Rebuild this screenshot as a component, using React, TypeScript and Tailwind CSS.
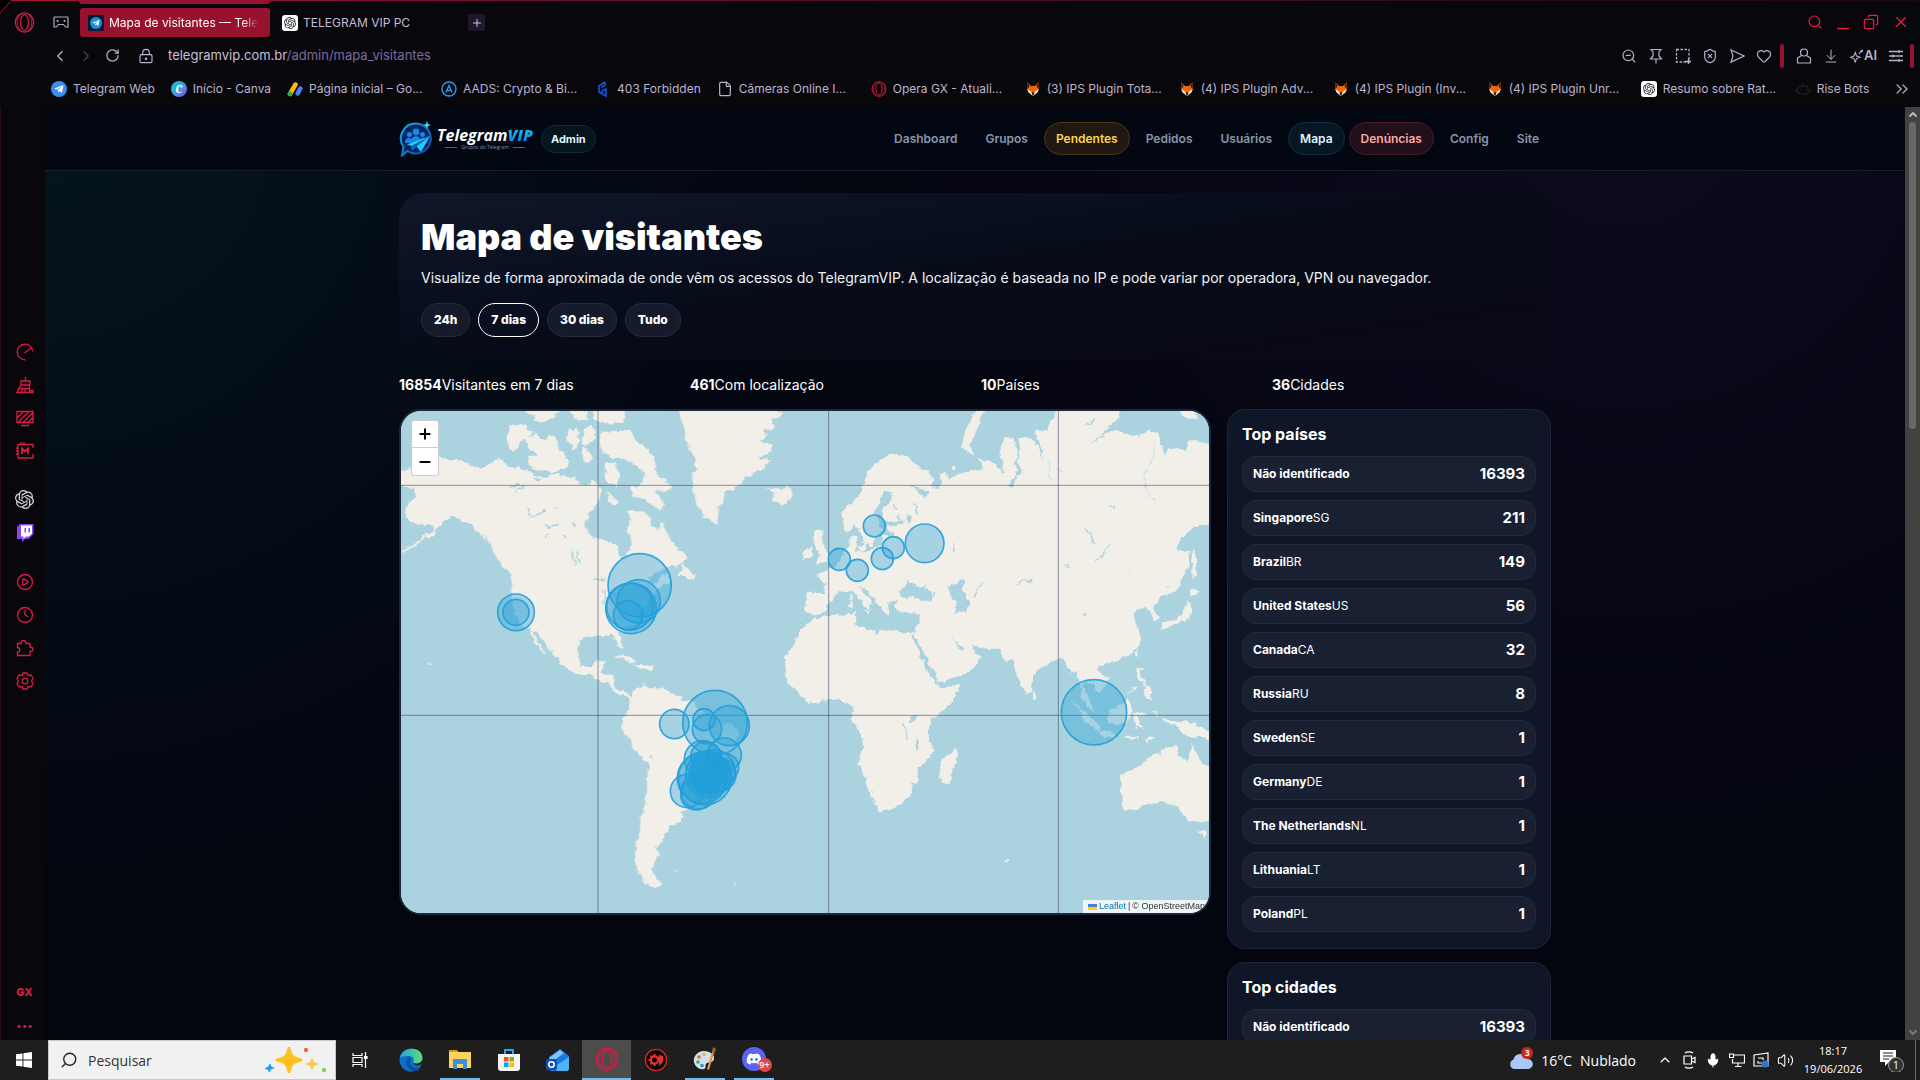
import { useState, type ReactNode } from "react";
import {
  ArrowDownToLine,
  ChevronDown,
  ChevronLeft,
  ChevronRight,
  ChevronUp,
  ChevronsRight,
  CirclePlay,
  Clock,
  Copy,
  File,
  Heart,
  LockKeyhole,
  Mic,
  Minus,
  Plus,
  RotateCw,
  Search,
  ShieldX,
  Volume2,
  X,
  ZoomOut,
} from "lucide-react";
import { FaDiscord, FaTelegramPlane } from "react-icons/fa";
import { SiOpenai } from "react-icons/si";

const OperaRing = ({ className }: { className?: string }) => (
  <svg viewBox="0 0 24 24" fill="none" stroke="#d61a45" strokeWidth="1.5" className={className}>
    <ellipse cx="12" cy="12" rx="10.4" ry="11" />
    <ellipse cx="12" cy="12" rx="4.6" ry="9" />
    <path d="M8 2.600C2.400 7 2.400 17 8 21.400M16 2.600c5.600 4.400 5.600 14.400 0 18.800" strokeWidth="1" />
  </svg>
);

const OpenAiTile = () => (
  <span className="flex h-4 w-4 shrink-0 items-center justify-center rounded-[3px] bg-white text-[#222]">
    <SiOpenai className="h-3 w-3" />
  </span>
);

const Fox = () => (
  <svg viewBox="0 0 16 16" className="h-4 w-4">
    <path d="M2 1l4 4h4l4-4-.4 8L8 15 2.400 9z" fill="#f2640c" />
    <path d="M2 1l2.500 4-1.800 3zM14 1l-2.500 4 1.800 3z" fill="#30140a" />
    <path d="M2.200 8l4 2.600L8 15 3.500 11.500zM13.800 8l-4 2.600L8 15l4.500-3.500z" fill="#f4e7dc" />
    <path d="M6.500 11.500h3L8 15z" fill="#1c0d08" />
  </svg>
);

interface Bookmark {
  label: string;
  icon: ReactNode;
  clipped?: boolean;
}

const BOOKMARKS: Bookmark[] = [
  {
    label: "Telegram Web",
    icon: (
      <span className="flex h-4 w-4 items-center justify-center rounded-full bg-[#3b8fec] text-white">
        <FaTelegramPlane className="h-2.5 w-2.5" />
      </span>
    ),
  },
  {
    label: "Início - Canva",
    icon: (
      <span className="flex h-4 w-4 items-center justify-center rounded-full bg-linear-to-br from-[#00c4cc] via-[#3aa0e0] to-[#7d2ae8] font-serif text-[12px] leading-none font-bold text-white italic">
        C
      </span>
    ),
  },
  {
    label: "Página inicial – Go...",
    clipped: true,
    icon: (
      <svg viewBox="0 0 16 16" className="h-4 w-4" strokeLinecap="round" strokeWidth="4.500">
        <path d="M8.500 3.500L3 13" stroke="#fbbc04" />
        <path d="M13.300 7.500l-2.600 5" stroke="#4285f4" />
        <circle cx="3" cy="12.800" r="2.400" fill="#34a853" />
      </svg>
    ),
  },
  {
    label: "AADS: Crypto & Bi...",
    clipped: true,
    icon: (
      <svg viewBox="0 0 16 16" className="h-4 w-4" fill="none" stroke="#2c9be8" strokeWidth="1.400">
        <circle cx="8" cy="8" r="7" />
        <path d="M5 11.500L8 4.500l3 7M6 9.500h4" />
      </svg>
    ),
  },
  {
    label: "403 Forbidden",
    icon: (
      <svg viewBox="0 0 16 16" className="h-4 w-4" fill="none" stroke="#1454d8" strokeWidth="1.700">
        <path d="M10 1L4 5v6l7 4V8L7.500 9.500v2.500M10 1v3L6.500 6.500" />
      </svg>
    ),
  },
  { label: "Câmeras Online I...", clipped: true, icon: <File className="h-4 w-4" strokeWidth={1.75} /> },
  { label: "Opera GX - Atuali...", clipped: true, icon: <OperaRing className="h-4 w-4" /> },
  { label: "(3) IPS Plugin Tota...", clipped: true, icon: <Fox /> },
  { label: "(4) IPS Plugin Adv...", clipped: true, icon: <Fox /> },
  { label: "(4) IPS Plugin (Inv...", clipped: true, icon: <Fox /> },
  { label: "(4) IPS Plugin Unr...", clipped: true, icon: <Fox /> },
  { label: "Resumo sobre Rat...", clipped: true, icon: <OpenAiTile /> },
  {
    label: "Rise Bots",
    icon: (
      <svg viewBox="0 0 16 16" className="h-4 w-4" fill="none" stroke="#1d1d22" strokeWidth="1.500">
        <rect x="3" y="5" width="10" height="8" rx="2" />
        <path d="M8 5V2M1 8v3M15 8v3M6 8.500v1.500M10 8.500v1.500" />
      </svg>
    ),
  },
];

const TabStrip = () => (
  <div className="flex h-[37px] items-end">
    <button type="button" aria-label="Menu" className="mb-1 ml-3.5 shrink-0">
      <OperaRing className="h-[21px] w-[21px]" />
    </button>
    <button type="button" aria-label="GX" className="mb-2 ml-[18px] shrink-0 text-[#b3aac6]">
      <svg viewBox="0 0 16 13" className="h-[13px] w-4" fill="none" stroke="currentColor" strokeWidth="1.200">
        <path d="M1.500 1h13l.5 1v9h-2.500l-2-2.500h-5L3.500 11H1V2z" />
        <path d="M4.500 4v2M3.500 5h2M11.500 4v2M10.500 5h2" />
      </svg>
    </button>
    <button
      type="button"
      className="ml-[11px] flex h-[29px] w-[190px] items-center gap-[5px] rounded-[3px] bg-[#98122f] px-2 text-[12px] whitespace-nowrap text-white"
    >
      <span className="flex h-4 w-4 shrink-0 items-center justify-center bg-[#0c1730]">
        <span className="flex h-3 w-3 items-center justify-center rounded-full bg-[#1d8fe0]">
          <FaTelegramPlane className="h-2 w-2" />
        </span>
      </span>
      <span className="mask-r-from-90%">Mapa de visitantes — Tele</span>
    </button>
    <button
      type="button"
      className="ml-3 flex h-[29px] w-[186px] items-center gap-[5px] text-[12px] text-[#c5bcd8]"
    >
      <OpenAiTile />
      TELEGRAM VIP PC
    </button>
    <button
      type="button"
      aria-label="Nova aba"
      className="mb-1.5 flex h-[17px] w-[17px] items-center justify-center rounded-[2px] bg-[#1f182b] text-[#d0c8e0]"
    >
      <Plus className="h-3 w-3" />
    </button>
    <div className="mr-2.5 mb-1.5 ml-auto flex items-center gap-[13px] text-[#f01c4c]">
      <button type="button" aria-label="Pesquisar abas">
        <Search className="h-4 w-4" strokeWidth={1.75} />
      </button>
      <button type="button" aria-label="Minimizar">
        <svg viewBox="0 0 14 16" className="h-4 w-3.5">
          <path d="M1 14.500h12" stroke="currentColor" strokeWidth="1.300" />
        </svg>
      </button>
      <button type="button" aria-label="Restaurar">
        <Copy className="h-4 w-4 rotate-90" strokeWidth={1.75} />
      </button>
      <button type="button" aria-label="Fechar">
        <X className="h-[18px] w-[18px]" strokeWidth={1.5} />
      </button>
    </div>
  </div>
);

const AddressBar = () => (
  <div className="flex h-[37px] items-center pl-[51px] text-[#b9b0cc]">
    <ChevronLeft className="h-[18px] w-[18px]" strokeWidth={1.75} />
    <ChevronRight className="ml-2 h-[18px] w-[18px] text-[#453f52]" strokeWidth={1.75} />
    <RotateCw className="ml-2.5 h-[15px] w-[15px]" strokeWidth={2} />
    <LockKeyhole className="ml-[18px] h-4 w-4" strokeWidth={1.75} />
    <p className="ml-3.5 text-[13px] text-[#c8c0da]">
      telegramvip.com.br<span className="text-[#7a6b9c]">/admin/mapa_visitantes</span>
    </p>
    <div className="ml-auto flex items-center gap-[11px] pr-2">
      <ZoomOut className="h-4 w-4" strokeWidth={1.75} />
      <svg viewBox="0 0 16 16" className="h-4 w-4" fill="none" stroke="currentColor" strokeWidth="1.200">
        <path d="M3 1.500h10l-2 2.500v4l2.500 3h-11L5 8V4zM8 11v4.500" />
      </svg>
      <svg viewBox="0 0 16 16" className="h-4 w-4" fill="none" stroke="currentColor" strokeWidth="1.300">
        <path d="M1.500 1.500h12.500v12.500H1.500z" strokeDasharray="2.500 1.500" />
        <path d="M10 13.500h6M13.500 10.500v5.500" />
      </svg>
      <ShieldX className="h-4 w-4" strokeWidth={1.75} />
      <svg viewBox="0 0 16 16" className="h-4 w-4" fill="none" stroke="currentColor" strokeWidth="1.200">
        <path d="M2 2l13 6-13 6 2-6z" />
      </svg>
      <Heart className="h-4 w-4" strokeWidth={1.75} />
    </div>
    <span className="h-6 w-1 rounded-full bg-[#98122f]" />
    <div className="flex items-center gap-[11px] pr-1.5 pl-3">
      <svg viewBox="0 0 16 16" className="h-4 w-4" fill="none" stroke="currentColor" strokeWidth="1.200">
        <circle cx="8" cy="4.500" r="3.500" />
        <path d="M5.500 7.500L1.500 10v5h13v-5l-4-2.500" />
      </svg>
      <ArrowDownToLine className="h-4 w-4" strokeWidth={1.5} />
      <span className="flex items-center text-[13px] font-semibold">
        <svg viewBox="0 0 16 16" className="h-3.5 w-3.5" fill="none" stroke="currentColor" strokeWidth="1.200">
          <path d="M6 4l1.500 4 4 1.500-4 1.500L6 15l-1.500-4-4-1.500 4-1.500zM10 5.500L14.500 1M13 1v3M11.500 2.500H15" />
        </svg>
        AI
      </span>
      <svg viewBox="0 0 16 16" className="h-4 w-4" fill="none" stroke="currentColor" strokeWidth="1.300">
        <path d="M1 3.500h14M1 8h14M1 12.500h14M11 2v3M5 6.500v3M11 11v3" />
      </svg>
    </div>
    <span className="mr-1.5 h-6 w-1 rounded-full bg-[#98122f]" />
  </div>
);

const BookmarkBar = () => (
  <nav aria-label="Favoritos" className="flex h-[33px] items-center pb-1 pl-[51px] text-[12px] text-[#bdb4cf]">
    <ul className="flex min-w-0 flex-1 gap-4 overflow-hidden">
      {BOOKMARKS.map((b) => (
        <li key={b.label} className={b.clipped ? "w-[138px] shrink-0" : "shrink-0"}>
          <a href="#" className="flex items-center gap-1.5 whitespace-nowrap">
            {b.icon}
            {b.label}
          </a>
        </li>
      ))}
    </ul>
    <ChevronsRight className="mr-2 h-5 w-5" strokeWidth={1.5} />
  </nav>
);

const GX_PANELS = [
  {
    name: "GX Control",
    icon: (
      <svg viewBox="0 0 18 18" className="h-[18px] w-[18px]" fill="none" stroke="currentColor" strokeWidth="1.300">
        <path d="M9.500 16.800A7.800 7.800 0 1 1 16.800 8.500M8.500 10L16 4.500" />
      </svg>
    ),
  },
  {
    name: "GX Cleaner",
    icon: (
      <svg viewBox="0 0 18 18" className="h-[18px] w-[18px]" fill="none" stroke="currentColor" strokeWidth="1.300">
        <path d="M9.500 1v4M5 5h9v4H5zM5 9L1 16.500h12.500V9M5 16.500l2-4M9 16.500v-3.500M2 12.500h11" />
        <path d="M15 14.500h2v2h-2z" />
      </svg>
    ),
  },
  {
    name: "Wallpapers",
    icon: (
      <svg viewBox="0 0 18 18" className="h-[18px] w-[18px]" fill="none" stroke="currentColor" strokeWidth="1.300">
        <path d="M1 2.500h16v11H1zM5 16.500h8M1 9l6.500-6.500M2 13.500l11-11M7 13.500l10-10M12 13.500l5-5" />
      </svg>
    ),
  },
  {
    name: "Mods",
    icon: (
      <svg viewBox="0 0 18 18" className="h-[18px] w-[18px]" fill="none" stroke="currentColor" strokeWidth="1.300">
        <path d="M17 6V2.500H2V16h15v-4M0 6h2M0 9h2M0 12h2M5 0v2M8 0v2" />
        <path d="M6 12V6.500l3 3 3-3V12" strokeWidth="1.800" />
      </svg>
    ),
  },
];

const SideBar = () => (
  <aside className="flex w-[45px] shrink-0 flex-col items-center border-l border-[#2a0a18] bg-[#08070c] pt-[228px] pl-[3px] text-[#d91c48]">
    {GX_PANELS.map((panel) => (
      <button key={panel.name} type="button" aria-label={panel.name} className="flex h-[33px] items-center">
        {panel.icon}
      </button>
    ))}
    <button type="button" aria-label="ChatGPT" className="mt-4 flex h-[33px] items-center text-[#d8d8dc]">
      <SiOpenai className="h-[19px] w-[19px]" />
    </button>
    <button type="button" aria-label="Twitch" className="flex h-[33px] items-center">
      <svg viewBox="0 0 18 18" className="h-[18px] w-[18px]">
        <path d="M4 0h13.500v10l-5 5H9l-3 3v-3H1V3z" fill="#8a46f0" />
        <path d="M5 1.500h11v8L13 12.500h-3L7.500 15v-2.500H5z" fill="#fff" />
        <path d="M8.500 4h1.500v4.500H8.500zM12.500 4H14v4.500h-1.500z" fill="#8a46f0" />
      </svg>
    </button>
    <button type="button" aria-label="Player" className="mt-4 flex h-[33px] items-center">
      <CirclePlay className="h-[18px] w-[18px]" strokeWidth={1.75} />
    </button>
    <button type="button" aria-label="Histórico" className="flex h-[33px] items-center">
      <Clock className="h-[18px] w-[18px]" strokeWidth={1.75} />
    </button>
    <button type="button" aria-label="Extensões" className="flex h-[33px] items-center">
      <svg viewBox="0 0 18 18" className="h-[18px] w-[18px]" fill="none" stroke="currentColor" strokeWidth="1.300">
        <path d="M1.500 4.500H5c0-4 5-4 5 0h4v3.500c4 0 4 4.500 0 4.500v4H1.500V13c3 0 3-4.500 0-4.500z" />
      </svg>
    </button>
    <button type="button" aria-label="Configurações" className="flex h-[33px] items-center">
      <svg viewBox="0 0 18 18" className="h-[18px] w-[18px]" fill="none" stroke="currentColor" strokeWidth="1.300">
        <path d="M7 1h4l1 2.500 3-.5 2 3.500L15.500 9l1.500 2.500-2 3.500-3-.5-1 2.500H7l-1-2.500-3 .5-2-3.500L2.500 9 1 6.500 3 3l3 .5z" />
        <circle cx="9" cy="9" r="2.800" />
      </svg>
    </button>
    <span className="mt-auto text-[11px] font-extrabold">GX</span>
    <span className="mt-4 mb-1 text-[16px] leading-5 font-extrabold">···</span>
  </aside>
);

const Logo = () => (
  <a href="#" className="flex items-center gap-1" aria-label="TelegramVIP">
    <svg viewBox="0 0 34 36" className="h-9 w-[34px]">
      <defs>
        <linearGradient id="bubble" x1="0" y1="0" x2="1" y2="1">
          <stop offset="0" stopColor="#13b4ea" />
          <stop offset="1" stopColor="#0a3fae" />
        </linearGradient>
      </defs>
      <path
        d="M17 2.500a15 15 0 1 1-8.500 27.500L3 34.500l1.500-8.500A15 15 0 0 1 17 2.500z"
        fill="#06255f"
        stroke="url(#bubble)"
        strokeWidth="2"
      />
      <g fill="#1c86e8">
        <circle cx="17" cy="11" r="3.400" />
        <circle cx="10.500" cy="13.500" r="2.500" />
        <circle cx="23.500" cy="13.500" r="2.500" />
        <path d="M11 22c0-9 12-9 12 0zM6 22c0-6 5-6 6-4l-1 4zM28 22c0-6-5-6-6-4l1 4z" />
      </g>
      <path d="M8 23.500L31 15 22 31l-4.500-5.500L13 29.500l-.5-4.500z" fill="#25c8f6" />
      <path d="M12.500 25L31 15 17.500 25.500 13 29.500z" fill="#0c62b4" />
      <path d="M28 0l1 3 3 1-3 1-1 3-1-3-3-1 3-1z" fill="#3fe4f7" />
    </svg>
    <span className="flex flex-col items-center font-['Open_Sans',sans-serif]">
      <span className="text-[16px] leading-[18px] font-bold text-white italic">
        Telegram
        <span className="bg-linear-to-b from-[#22d3ee] to-[#1670ea] bg-clip-text font-extrabold text-transparent">
          VIP
        </span>
      </span>
      <span className="flex items-center gap-1 text-[5px] leading-[7px] text-[#7c93b4]">
        <i className="h-px w-3 bg-[#4b5f80]" />
        Grupos do Telegram
        <i className="h-px w-3 bg-[#4b5f80]" />
      </span>
    </span>
  </a>
);

const NAV = [
  { label: "Dashboard", style: "border-transparent text-[#8896ac]" },
  { label: "Grupos", style: "border-transparent text-[#8896ac]" },
  { label: "Pendentes", style: "border-[#4d3711] bg-[#1f1813] text-[#fcd34d]" },
  { label: "Pedidos", style: "border-transparent text-[#8896ac]" },
  { label: "Usuários", style: "border-transparent text-[#8896ac]" },
  { label: "Mapa", style: "border-[#0e3044] bg-[#061723] text-[#dff4ff]" },
  { label: "Denúncias", style: "border-[#4c1a24] bg-[#211019] text-[#fca5a5]" },
  { label: "Config", style: "border-transparent text-[#8896ac]" },
  { label: "Site", style: "border-transparent text-[#8896ac]" },
];

const AdminHeader = () => (
  <header className="border-b border-[#171d29] bg-[#030711]">
    <div className="mx-auto flex h-[63px] max-w-[1152px] items-center">
      <Logo />
      <span className="ml-2 rounded-full border border-[#0f2c3c] bg-[#06141e] px-[9px] py-1 text-[11px] leading-[18px] font-bold text-[#dff4ff]">
        Admin
      </span>
      <nav className="ml-auto flex items-center gap-1">
        {NAV.map((item) => (
          <a
            key={item.label}
            href="#"
            className={`rounded-full border px-[11px] py-1.5 text-[12px] leading-[19px] font-semibold ${item.style}`}
          >
            {item.label}
          </a>
        ))}
      </nav>
    </div>
  </header>
);

const PERIODS = ["24h", "7 dias", "30 dias", "Tudo"];

const Hero = () => {
  const [period, setPeriod] = useState("7 dias");

  return (
    <section className="rounded-[26px] bg-linear-to-br from-[#0f172a] via-[#070b18] to-[#0a0814] px-[22px] pt-[22px] pb-[23px]">
      <h1 className="text-[36px] leading-[45px] font-black text-white">Mapa de visitantes</h1>
      <p className="mt-1.5 text-[14px] leading-6 text-[#f1f3f7]">
        Visualize de forma aproximada de onde vêm os acessos do TelegramVIP. A localização é baseada no IP e pode
        variar por operadora, VPN ou navegador.
      </p>
      <div className="mt-[13px] flex gap-2">
        {PERIODS.map((p) => (
          <button
            key={p}
            type="button"
            aria-pressed={p === period}
            onClick={() => setPeriod(p)}
            className={`rounded-full border px-3 py-1.5 text-[12px] leading-5 font-extrabold text-white ${
              p === period ? "border-white bg-[#0a1020]" : "border-[#242b3b] bg-[#151b2b]"
            }`}
          >
            {p}
          </button>
        ))}
      </div>
    </section>
  );
};

const STATS = [
  { value: "16854", label: "Visitantes em 7 dias" },
  { value: "461", label: "Com localização" },
  { value: "10", label: "Países" },
  { value: "36", label: "Cidades" },
];

// [cx, cy, r] on the map drawing's own grid
const VISITORS: [number, number, number][] = [
  [348, 613, 55],
  [348, 613, 39],
  [719, 532, 95],
  [716, 580, 65],
  [693, 601, 76],
  [690, 596, 70],
  [684, 622, 44],
  [823, 948, 44],
  [945, 944, 97],
  [988, 953, 60],
  [912, 935, 33],
  [921, 964, 44],
  [973, 1041, 51],
  [908, 1053, 55],
  [918, 1047, 46],
  [907, 1111, 75],
  [915, 1110, 80],
  [925, 1100, 68],
  [925, 1080, 50],
  [861, 1149, 50],
  [888, 1160, 46],
  [896, 1150, 53],
  [940, 1090, 65],
  [974, 1078, 42],
  [958, 1100, 50],
  [920, 1105, 46],
  [925, 1100, 58],
  [1423, 354, 33],
  [1318, 454, 33],
  [1372, 487, 33],
  [1447, 452, 33],
  [1480, 419, 33],
  [1574, 406, 58],
  [2082, 913, 98],
];

const AMERICAS =
  "M-20 190L30 180 60 155 115 148 160 155 190 158 215 172 245 182 270 165 300 150 315 165 330 178 365 180 395 195 410 207 440 205 470 195 500 207 525 205 540 228 560 235 575 215 595 225 602 250 600 270 590 290 565 315 557 345 560 372 580 388 610 390 640 412 655 415 655 445 670 455 680 435 695 410 690 385 683 370 690 345 685 310 710 307 745 320 755 350 775 365 785 342 800 370 815 400 830 420 855 435 857 455 835 475 800 478 770 490 750 510 742 530 765 525 790 500 805 495 815 520 800 532 775 540 765 560 742 580 730 600 715 625 700 645 675 660 655 672 668 715 662 722 650 702 640 680 600 684 570 685 540 695 533 720 535 750 545 775 575 778 590 760 615 755 610 775 605 798 640 801 645 836 660 851 680 853 692 864 705 846 735 829 745 841 780 841 815 851 845 876 885 881 895 906 930 921 960 946 1000 951 1017 966 1015 991 1000 1018 970 1056 965 1096 930 1121 900 1156 880 1186 860 1206 835 1206 850 1226 840 1246 808 1249 805 1271 785 1271 795 1286 770 1321 780 1336 765 1356 757 1386 770 1411 790 1428 765 1441 740 1426 720 1401 707 1366 705 1331 715 1286 722 1236 735 1186 740 1136 745 1066 715 1041 700 1026 690 996 662 961 668 931 690 906 692 876 680 864 655 861 630 841 625 828 600 818 575 801 545 801 510 786 475 766 478 750 460 742 430 700 405 668 400 680 440 738 430 735 410 710 395 690 385 660 355 640 340 600 332 550 335 500 310 475 285 440 260 400 235 370 215 350 190 340 155 325 125 340 100 375 60 405 3 437 3 430 70 390 105 360 80 350 50 350 25 335 12 310 25 285 50 265 40 240-20 232z";

const ARCTIC =
  "M330 48L365 45 400 75 370 95 340 132 320 110zM375 90L410 78 425 95 465 80 475 120 510 155 500 180 460 190 420 190 385 175 390 145 415 140 380 112zM370 5L490 5 440 40 410 45 400 22zM500 5L560 5 565 35 540 37zM575 5L672 5 670 45 590 42zM505 70L530 58 542 100 520 125 500 100zM550 60L590 60 580 100 548 110zM550 110L577 150 562 172 545 150zM600 78L640 68 690 70 712 105 745 125 770 165 760 190 815 232 800 252 765 245 790 290 780 305 740 280 700 265 688 238 720 230 735 200 710 175 680 155 640 150 600 125zM612 165L650 165 660 200 645 235 620 225zM620 250L657 282 640 290 622 275zM835 0L845 40 855 70 860 110 885 150 890 185 875 195 878 240 890 290 915 325 950 347 958 300 975 255 1015 235 1035 205 1080 190 1115 155 1065 148 1112 135 1115 110 1078 97 1102 80 1085 65 1125 60 1115 35 1145 22 1125 0zM1100 240L1130 245 1160 235 1180 255 1170 275 1140 290 1115 280 1122 260zM848 462L860 480 880 500 878 515 830 500 845 485zM636 745L665 740 712 762 690 766 665 750zM700 770L760 774 757 784 722 784zM75 375l40 -5 -10 15 -25 5z";

const EURASIA =
  "M125 310L145 290 175 270 190 230 205 190 240 155 285 135 325 150 350 175 385 190 402 215 395 238 410 240 425 235 420 200 437 190 442 215 455 210 490 190 545 190 550 175 535 150 575 160 612 197 605 160 600 130 615 90 640 92 650 130 645 180 652 200 620 232 640 235 665 190 652 160 662 110 650 85 685 85 715 110 727 158 730 130 715 95 705 70 745 65 750 40 775 0 962 0 955 30 905 80 950 65 1000 85 1035 75 1045 65 1075 75 1085 120 1095 140 1110 120 1160 125 1170 95 1250 115 1250 352 1185 355 1150 385 1125 420 1150 430 1168 435 1165 480 1140 530 1115 555 1080 565 1060 600 1077 630 1060 642 1050 610 1035 600 1015 608 990 600 1020 580 1005 612 1000 625 1020 665 1022 700 1000 735 970 750 930 765 905 775 890 771 905 791 925 811 915 841 895 856 885 836 860 821 850 821 847 836 865 866 880 896 878 911 860 896 845 861 843 831 830 796 810 798 800 766 790 750 770 755 745 765 730 771 700 801 695 851 680 859 665 836 645 776 642 752 620 762 600 725 540 720 520 712 495 722 485 718 465 698 455 683 462 700 485 732 515 708 525 735 543 748 520 781 490 801 445 818 420 826 410 806 385 756 350 692 343 672 358 640 360 620 330 618 295 610 285 590 292 575 262 585 270 622 250 612 240 590 215 565 190 540 180 532 185 550 215 580 210 610 200 600 170 560 155 545 110 555 85 590 80 600 60 620 40 622 15 610 20 555 72 555 78 530 50 500 75 490 95 480 120 460 130 430 150 415 148 390 165 380 172 400 168 422 190 410 180 365 165 352 138 373 125 345z";

const AFRICA =
  "M5 660L35 635 50 635 80 625 165 615 170 635 165 650 210 665 235 678 240 668 265 665 290 668 325 672 343 670 337 685 355 730 372 765 375 786 415 826 422 841 480 831 465 866 430 906 395 936 385 961 390 991 398 1016 395 1046 355 1076 357 1116 335 1131 335 1156 290 1201 235 1208 225 1196 215 1156 200 1131 195 1101 178 1066 178 1046 190 1016 185 981 155 936 160 896 130 886 120 874 85 876 25 888 -10 851 -42 816 -45 756 -40 740 -10 690z";

const EAST_ISLANDS =
  "M45 365L70 365 60 388 85 440 92 460 45 470 60 440 40 400zM10 430L35 415 40 445 10 460zM560 0L530 60 510 110 525 145 485 120 495 70 530 0zM1175 430L1185 430 1190 490 1178 520zM1172 540L1200 550 1175 568zM1165 575L1176 600 1165 635 1120 650 1085 668 1090 642 1130 635 1150 610zM1012 725l8 5 -8 18 -5 -8zM698 848L713 868 700 876zM465 1018L472 1046 445 1124 425 1124 418 1096 425 1056 450 1041zM920 916L985 871 998 906 975 951 930 946zM815 876L850 906 905 956 892 966 860 946 835 901zM895 966L950 981 945 991 900 984zM970 985l50 3 -2 6 -48 -2zM1035 998l25 -12 2 5 -22 12zM1000 916L1047 914 1010 926 1030 961 1015 951 1005 966zM1010 778L1025 782 1020 806 1050 841 1052 876 1030 861 1038 835 1008 806zM985 856l18 -22 3 3 -18 22zM1065 905l8 20 -6 2 -5 -20zM1090 931L1115 934 1130 946 1160 936 1250 981 1250 1005 1205 988 1150 981 1130 956 1100 946zM960 1101L985 1086 1020 1076 1060 1036 1080 1041 1085 1021 1130 1014 1133 1041 1165 1063 1178 1006 1190 1041 1200 1056 1250 1090 1250 1235 1190 1246 1160 1231 1140 1206 1125 1196 1085 1178 1030 1198 975 1211 970 1196 965 1156zM1195 1268L1222 1271 1212 1296zM455 175l12 0 2 12 -12 0zM152 560l6 0 0 12 -6 0zM150 575l8 2 0 20 -7 0zM185 608l20 2 -2 8zM1140 5l50 -5 0 30 -45 -5zM612 1356l14 0 -4 8z";

const EAST_WATERS =
  "M165 420L195 425 200 405 220 415 225 390 245 370 235 330 218 315 240 285 250 248 278 252 275 272 250 300 248 325 265 345 310 335 310 350 262 355 270 375 290 370 280 385 250 380 250 410 215 425 170 430zM335 228L350 240 370 240 385 250 380 268 372 268 350 250zM300 555L325 518 345 535 365 540 385 513 372 535 405 565 395 578 370 578 340 568 305 572zM445 540L480 515 492 520 490 550 505 580 498 618 465 612 470 590 455 565zM320 320l15 5 0 15 -15 0zM328 925l20 -5 -5 22 -15 0zM345 1000l6 -12 4 40 -6 -2zM310 945l4 -2 10 45 -4 2z";

const WorldMap = () => (
  <svg viewBox="3 9 2424 1506" preserveAspectRatio="xMidYMid slice" className="block h-full w-full">
    <defs>
      <filter id="coast" x="0" y="0" width="100%" height="100%">
        <feTurbulence type="fractalNoise" baseFrequency="0.05" numOctaves="4" seed="4" />
        <feDisplacementMap in="SourceGraphic" scale="20" xChannelSelector="R" yChannelSelector="G" />
      </filter>
    </defs>
    <rect x="0" y="0" width="2440" height="1530" fill="#aad3df" />
    <g filter="url(#coast)">
      <g fill="#f2efe9">
        <path d={AMERICAS} />
        <path d={ARCTIC} />
        <path d="M818 1388l20 -4 -10 8zM995 1418l14 8 -4 3zM85 762l8 8 -6 4z" />
        <g transform="translate(1200 0)">
          <path d={EURASIA} />
          <path d={AFRICA} />
          <path d={EAST_ISLANDS} />
        </g>
      </g>
      <g fill="none" stroke="#aad3df" strokeWidth="5">
        <path d="M328 240l30 -12M345 252l30 -20M392 330l45 -22M380 300l15 20M440 355l35 -5M435 388l8 -10M515 435l12 35M528 432l14 38M465 295l8 5M490 380l8 10M578 515l40 0M615 545l-5 45M748 1045l8 6M400 210l25 8M520 345l10 14" />
        <path d="M275 420l-20 -40M262 395l-14 22" strokeWidth="3" />
        <g transform="translate(1200 0)">
          <path
            d="M883 460l25 -12 18 -40M650 530l12 -10 35 -2M530 540l22 -18M525 570l5 -25M858 50l30 -15M875 105l35 -22M850 365l22 10 8 30M460 430l5 -25M930 290l12 10M795 475l8 2M850 617l8 4M1100 535l6 3M985 490l4 2M680 563l4 2M345 290l10 30M280 290l8 15M295 320l8 14"
            strokeWidth="4"
          />
          <path d="M1063 100l0 45 -30 50 5 50 32 42M745 160l5 60M775 180l15 10" strokeWidth="2" />
        </g>
      </g>
      <path d={EAST_WATERS} transform="translate(1200 0)" fill="#aad3df" />
    </g>
    <path
      d="M594 0v1530M1286 0v1530M1975 0v1530M0 232h2440M0 922h2440"
      stroke="#3a3a55"
      strokeOpacity=".55"
      strokeWidth="3"
    />
    <g fill="#229ed9" fillOpacity=".36" stroke="#229ed9" strokeOpacity=".9" strokeWidth="5">
      {VISITORS.map(([cx, cy, r], i) => (
        <circle key={i} cx={cx} cy={cy} r={r} />
      ))}
    </g>
  </svg>
);

const MapPanel = () => (
  <div className="relative h-[506px] overflow-hidden rounded-[22px] border-2 border-[#1d263a] bg-[#aad3df]">
    <WorldMap />
    <div className="absolute top-[9px] left-2.5 flex flex-col rounded-[3px] border border-black/20 bg-white text-black">
      <button
        type="button"
        aria-label="Aproximar"
        className="flex h-[27px] w-[26px] items-center justify-center border-b border-[#ccc]"
      >
        <Plus className="h-4 w-4" strokeWidth={3} />
      </button>
      <button type="button" aria-label="Afastar" className="flex h-[27px] w-[26px] items-center justify-center">
        <Minus className="h-4 w-4" strokeWidth={3} />
      </button>
    </div>
    <div className="absolute right-0 bottom-0 flex h-[13px] items-center gap-[2px] bg-white/80 pr-1 pl-[5px] font-['Liberation_Sans',sans-serif] text-[9px] text-[#333]">
      <svg viewBox="0 0 9 6" className="h-1.5 w-[9px]">
        <path d="M0 0h9v3H0z" fill="#4c7be1" />
        <path d="M0 3h9v3H0z" fill="#ffd500" />
      </svg>
      <a href="#" className="text-[#0078a8]">
        Leaflet
      </a>
      <span>|</span>
      <span>© OpenStreetMap</span>
    </div>
  </div>
);

interface Place {
  name: string;
  code?: string;
  total: number;
}

const COUNTRIES: Place[] = [
  { name: "Não identificado", total: 16393 },
  { name: "Singapore", code: "SG", total: 211 },
  { name: "Brazil", code: "BR", total: 149 },
  { name: "United States", code: "US", total: 56 },
  { name: "Canada", code: "CA", total: 32 },
  { name: "Russia", code: "RU", total: 8 },
  { name: "Sweden", code: "SE", total: 1 },
  { name: "Germany", code: "DE", total: 1 },
  { name: "The Netherlands", code: "NL", total: 1 },
  { name: "Lithuania", code: "LT", total: 1 },
  { name: "Poland", code: "PL", total: 1 },
];

const CITIES: Place[] = [{ name: "Não identificado", total: 16393 }];

const RankCard = ({ title, places }: { title: string; places: Place[] }) => (
  <section className="rounded-[18px] border border-[#1e2739] bg-[#0e1628] px-3.5 pt-3.5 pb-4">
    <h2 className="text-[16px] leading-5 font-bold text-white">{title}</h2>
    <ul className="mt-3 flex flex-col gap-2">
      {places.map((p) => (
        <li
          key={p.name}
          className="flex h-9 items-center justify-between rounded-[14px] border border-[#222a3b] bg-[#182032] px-2.5 text-white"
        >
          <span className="text-[12px]">
            <strong className="font-bold">{p.name}</strong>
            {p.code}
          </span>
          <strong className="text-[15px] font-bold">{p.total}</strong>
        </li>
      ))}
    </ul>
  </section>
);

const APPS: { name: string; state?: "open" | "active"; icon: ReactNode }[] = [
  {
    name: "Edge",
    icon: (
      <svg viewBox="0 0 24 24" className="h-6 w-6">
        <defs>
          <linearGradient id="edge" x1="0" y1="0" x2="1" y2="0">
            <stop offset="0" stopColor="#1d9fe8" />
            <stop offset="1" stopColor="#5fe070" />
          </linearGradient>
        </defs>
        <circle cx="12" cy="12" r="11.500" fill="#0f6fc6" />
        <path d="M.5 11C2-2 23-3 23.500 10c0 6-8 7-9.500 4 2-2 0-6-4-6S1 8 .5 11z" fill="url(#edge)" />
        <path d="M10 9c-6 5-1 14 6 14 3 0 5-2 6-4-4 2-10 1-11-4-.4-2 .5-3 1-4z" fill="#0b4fa0" />
        <path d="M14 14c1.500 3 9.500 2 9.500-4v5c-2 3-8 4-9.500-1z" fill="#202020" />
      </svg>
    ),
  },
  {
    name: "Explorador",
    state: "open",
    icon: (
      <svg viewBox="0 0 24 24" className="h-6 w-6">
        <path d="M1 3h8l2 3H1z" fill="#d99a12" />
        <path d="M1 5h22v16H1z" fill="#fbd35f" />
        <path d="M5 12h14v10h-4v-5H9v5H5z" fill="#3f8fdc" />
      </svg>
    ),
  },
  {
    name: "Loja",
    icon: (
      <svg viewBox="0 0 24 24" className="h-6 w-6">
        <path d="M8 7V2h8v5" fill="none" stroke="#22a7f0" strokeWidth="2" />
        <path d="M1 6h22v14a3 3 0 0 1-3 3H4a3 3 0 0 1-3-3z" fill="#f4f4f4" />
        <path d="M7 9h4.500v4.500H7z" fill="#f25022" />
        <path d="M12.500 9H17v4.500h-4.500z" fill="#7fba00" />
        <path d="M7 14.500h4.500V19H7z" fill="#00a4ef" />
        <path d="M12.500 14.500H17V19h-4.500z" fill="#ffb900" />
      </svg>
    ),
  },
  {
    name: "Outlook",
    icon: (
      <svg viewBox="0 0 24 24" className="h-6 w-6">
        <path d="M3 9L14 1l9 7v12a3 3 0 0 1-3 3H6a3 3 0 0 1-3-3z" fill="#1e78e0" />
        <path d="M3 10L14 2l4 3L6 14z" fill="#7cc6fb" />
        <path d="M23 9L8 19l3 4h9a3 3 0 0 0 3-3z" fill="#4fb4f7" />
        <rect x="0" y="11" width="11" height="11" rx="2" fill="#0f4fb8" />
        <circle cx="5.500" cy="16.500" r="2.700" fill="none" stroke="#fff" strokeWidth="1.500" />
      </svg>
    ),
  },
  { name: "Opera GX", state: "active", icon: <OperaRing className="h-6 w-6" /> },
  {
    name: "Otimizador",
    icon: (
      <svg viewBox="0 0 24 24" className="h-6 w-6">
        <circle cx="12" cy="12" r="10.600" fill="#120506" stroke="#d32626" strokeWidth="1.400" />
        <circle cx="10.500" cy="12" r="3.600" fill="none" stroke="#e33030" strokeWidth="2.200" />
        <path
          d="M10.500 6v2M10.500 16v2M4.500 12h2M6.300 7.800l1.400 1.400M6.300 16.200l1.400-1.400"
          stroke="#e33030"
          strokeWidth="2"
        />
        <path d="M13 12l2-5 4 1v6l-4 4v-5z" fill="#e33030" />
      </svg>
    ),
  },
  {
    name: "Paint",
    state: "open",
    icon: (
      <svg viewBox="0 0 24 24" className="h-6 w-6">
        <path d="M11 4C4 4 0 10 1 15s6 8 10 7c3-1 0-4 3-6 2-1 6 0 7-4s-4-8-10-8z" fill="#cfe3ee" />
        <circle cx="6" cy="10" r="1.800" fill="#e85a3c" />
        <circle cx="11" cy="7.500" r="1.800" fill="#f5b52e" />
        <circle cx="5" cy="15" r="1.800" fill="#43a858" />
        <circle cx="9" cy="18.500" r="1.800" fill="#3a86d8" />
        <path d="M21 6l-5 17-2-1L19 5z" fill="#e89436" />
        <path d="M19 5l1-5 3 2-2 5z" fill="#9c6a40" />
      </svg>
    ),
  },
  {
    name: "Discord",
    state: "open",
    icon: (
      <span className="relative flex h-6 w-6 items-center justify-center rounded-full bg-[#5865f2] text-white">
        <FaDiscord className="h-4 w-4" />
        <span className="absolute -right-1.5 -bottom-px flex h-3.5 w-3.5 items-center justify-center rounded-full bg-[#e0454a] text-[9px] font-semibold">
          9+
        </span>
      </span>
    ),
  },
];

const TaskBar = () => (
  <footer className="flex h-10 shrink-0 items-stretch bg-[#1e1e1e] font-['Open_Sans',sans-serif] text-white">
    <button type="button" aria-label="Iniciar" className="flex w-12 items-center justify-center">
      <svg viewBox="0 0 16 16" className="h-4 w-4" fill="#fff">
        <path d="M0 2.300L6.500 1.400v6.200H0zM7.400 1.300L16 0v7.600H7.400zM0 8.400h6.500v6.200L0 13.700zM7.400 8.400H16V16l-8.600-1.300z" />
      </svg>
    </button>
    <label className="flex w-72 items-center border border-[#c8c8c8] bg-[#f1f1f1] pl-[11px] text-[#222]">
      <Search className="h-[18px] w-[18px] -scale-x-100" strokeWidth={1.75} />
      <input
        type="search"
        aria-label="Pesquisar"
        placeholder="Pesquisar"
        className="ml-2.5 min-w-0 flex-1 bg-transparent text-[14px] outline-none placeholder:text-[#333]"
      />
      <svg viewBox="0 0 62 26" className="mr-2 h-[26px] w-[62px]">
        <path d="M24 1c2 8 3 10 12 12-9 2-10 4-12 12-2-8-3-10-12-12 9-2 10-4 12-12z" fill="#fcc21f" />
        <path d="M24 1c2 8 3 10 12 12-9 2-10 4-12 12-2-8-3-10-12-12 9-2 10-4 12-12z" fill="none" stroke="#fcc21f" strokeWidth="3" strokeLinejoin="round" />
        <path d="M47 11c1 4 2 5 6 6-4 1-5 2-6 6-1-4-2-5-6-6 4-1 5-2 6-6z" fill="#fcc94a" stroke="#fcc94a" strokeLinejoin="round" />
        <path d="M5 17c.5 2 1.500 3.500 4 4-2.500.5-3.500 1-4.500 4C4 23 3 22 0 21.500 3 20.500 4 20 5 17z" fill="#1da1f2" stroke="#1da1f2" />
        <circle cx="41" cy="3" r="2.200" fill="#f26a3a" />
        <circle cx="59" cy="23" r="2.200" fill="#8ccf4d" />
      </svg>
    </label>
    <button type="button" aria-label="Visão de tarefas" className="mr-0.5 flex w-12 items-center justify-center">
      <svg viewBox="0 0 16 16" className="h-4 w-4" fill="none" stroke="#fff" strokeWidth="1.200">
        <path d="M1 1v2.500h9V1M1 15v-2.500h9V15M1 5.500h9v5H1zM13.500 0v16" />
        <path d="M12.500 4.500h2.500v2h-2.500z" fill="#fff" />
      </svg>
    </button>
    {APPS.map((app) => (
      <button
        key={app.name}
        type="button"
        aria-label={app.name}
        className={`flex w-[49px] flex-col items-center ${app.state === "active" ? "bg-[#4c4c4c]" : ""}`}
      >
        <span className="flex flex-1 items-center">{app.icon}</span>
        {app.state && <span className={`h-0.5 bg-[#76b9ed] ${app.state === "active" ? "w-full" : "w-10"}`} />}
      </button>
    ))}
    <div className="ml-auto flex items-center">
      <span className="relative">
        <svg viewBox="0 0 24 18" className="h-[18px] w-6">
          <path d="M5 18a5 5 0 0 1-.5-9.500A7 7 0 0 1 18 8a5 5 0 0 1 1.500 10z" fill="#a9c8f7" />
        </svg>
        <span className="absolute -top-1 right-0 flex h-3 w-3 items-center justify-center rounded-full bg-[#c42b1c] text-[8px] font-bold">
          3
        </span>
      </span>
      <span className="ml-2 text-[14px]">16°C</span>
      <span className="ml-2 text-[14px]">Nublado</span>
      <div className="ml-[21px] flex items-center gap-2">
        <ChevronUp className="h-4 w-4" strokeWidth={1.75} />
        <svg viewBox="0 0 16 18" className="h-[18px] w-4" fill="none" stroke="#fff" strokeWidth="1.200">
          <path d="M3 5h7.500v8H3zM10.500 8l3.500-1.500v5L10.500 10M4 2c2-1.500 6-1.500 8 0M4 16c2 1.500 6 1.500 8 0" />
        </svg>
        <Mic className="h-[17px] w-4 fill-white" strokeWidth={1.5} />
        <svg viewBox="0 0 16 16" className="h-4 w-4" fill="none" stroke="#fff" strokeWidth="1.200">
          <path d="M5 3h10.500v8H3.500V7M9 11v3M6 14.500h6.500M.5 2h4v3.500h-4z" />
        </svg>
        <svg viewBox="0 0 16 16" className="h-4 w-4" fill="none" stroke="#fff" strokeWidth="1.200">
          <path d="M1 3l14-2v13H1zM5 6h5v2M10 11H5V9" />
          <circle cx="12" cy="12" r="3.600" fill="#2a78c8" stroke="none" />
        </svg>
        <Volume2 className="h-[17px] w-[17px]" strokeWidth={1.5} />
      </div>
      <div className="ml-[9px] w-[60px] text-center text-[11px] leading-[18px]">
        <p>18:17</p>
        <p>19/06/2026</p>
      </div>
      <button type="button" aria-label="Notificações" className="mr-[11px] ml-[17px]">
        <svg viewBox="0 0 24 24" className="h-6 w-6">
          <path d="M0 2h16v12H9l-4 4v-4H0z" fill="#fff" />
          <path d="M3 5h10M3 8h10M3 11h6" stroke="#1e1e1e" />
          <circle cx="16" cy="17" r="7.500" fill="#333" stroke="#999" />
          <text x="16" y="21" textAnchor="middle" fill="#fff" fontSize="11">
            1
          </text>
        </svg>
      </button>
      <span className="mr-1 h-full w-px bg-[#6a6a6a]" />
    </div>
  </footer>
);

const App = () => {
  return (
    <div className="flex h-screen flex-col overflow-hidden bg-[#08070c] font-[Inter,sans-serif]">
      <div className="relative shrink-0">
        <div className="absolute inset-x-0 top-0 h-px bg-linear-to-r from-[#a5143a] via-[#4a0d20] to-[#1a0810]" />
        <svg viewBox="0 0 280 14" className="absolute top-0 left-0 h-3.5 w-[280px]">
          <path d="M0 0h12L0 13z" fill="#000" />
          <path d="M12 0L0 13" stroke="#a5143a" fill="none" />
          <path d="M77 0h196l-5 4H81z" fill="#98122f" />
        </svg>
        <TabStrip />
        <AddressBar />
        <BookmarkBar />
      </div>

      <div className="flex min-h-0 flex-1">
        <SideBar />
        <main className="min-w-0 flex-1 overflow-hidden bg-[#03050f] bg-[radial-gradient(circle_at_0_0,#06151f_0,transparent_800px),radial-gradient(circle_at_85%_0,#0e0a1e_0,transparent_760px)] text-white">
          <AdminHeader />
          <div className="mx-auto max-w-[1152px] pt-[22px]">
            <Hero />
            <dl className="mt-[13px] grid grid-cols-4 gap-3 text-[14px] leading-6">
              {STATS.map((s) => (
                <div key={s.label} className="flex">
                  <dt className="order-2">{s.label}</dt>
                  <dd className="font-bold">{s.value}</dd>
                </div>
              ))}
            </dl>
            <div className="mt-3 grid grid-cols-[1fr_324px] items-start gap-4">
              <MapPanel />
              <div className="flex flex-col gap-[13px]">
                <RankCard title="Top países" places={COUNTRIES} />
                <RankCard title="Top cidades" places={CITIES} />
              </div>
            </div>
          </div>
        </main>
        <div className="flex w-[15px] shrink-0 flex-col items-center bg-[#424242] text-[#b8b8b8]">
          <ChevronUp className="h-[15px] w-3" strokeWidth={4} />
          <div className="h-[307px] w-[7px] rounded-full bg-[#686868]" />
          <ChevronDown className="mt-auto h-[15px] w-3 text-[#777]" strokeWidth={4} />
        </div>
      </div>

      <TaskBar />
    </div>
  );
};

export default App;
